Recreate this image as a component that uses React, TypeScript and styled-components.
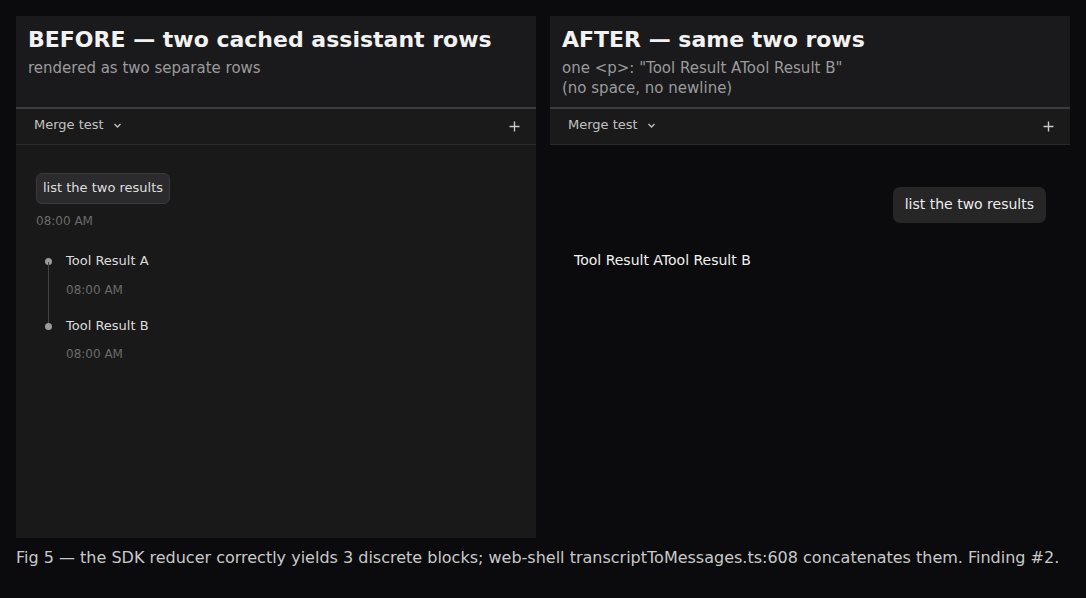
import React from "react";
import styled, { createGlobalStyle } from "styled-components";

const Global = createGlobalStyle`
  html, body { margin: 0; padding: 0; background: #0b0b0d; }
  body { font-family: "DejaVu Sans", sans-serif; color: #e6e6e6; }
`;

const Page = styled.div`
  padding: 16px;
  display: flex;
  flex-direction: column;
  gap: 10px;
`;

const Columns = styled.div`
  display: grid;
  grid-template-columns: 520px 520px;
  column-gap: 14px;
`;

const Panel = styled.section<{ $dark?: boolean }>`
  height: 522px;
  display: flex;
  flex-direction: column;
  background: ${(p) => (p.$dark ? "#0b0b0d" : "#191919")};
`;

const Header = styled.header`
  height: 93px;
  box-sizing: border-box;
  padding: 10px 12px 0;
  background: #1a1a1c;
  border-bottom: 2px solid #3b3b3f;
`;

const Title = styled.h2`
  margin: 0;
  font-size: 22px;
  font-weight: 700;
  line-height: 28px;
  color: #f2f2f2;
`;

const Subtitle = styled.p`
  margin: 4px 0 0;
  font-size: 15px;
  line-height: 20px;
  color: #9b9b9b;
`;

const Toolbar = styled.div`
  height: 36px;
  box-sizing: border-box;
  display: flex;
  align-items: center;
  justify-content: space-between;
  padding: 0 16px 0 18px;
  background: #1a1a1a;
  border-bottom: 1px solid #2a2a2a;
`;

const Picker = styled.div`
  display: flex;
  align-items: center;
  gap: 8px;
  font-size: 13px;
  color: #c2c2c2;
  margin-top: -5px;
`;

const IconButton = styled.span`
  display: flex;
  color: #c8c8c8;
`;

const Body = styled.div<{ $pad: string }>`
  flex: 1;
  padding: ${(p) => p.$pad};
  display: flex;
  flex-direction: column;
`;

const Bubble = styled.div`
  align-self: flex-start;
  padding: 6px 6px 8px;
  font-size: 13px;
  line-height: 15px;
  color: #dedede;
  background: #2b2b2d;
  border: 1px solid #3a3a3c;
  border-radius: 6px;
`;

const RightBubble = styled.div`
  align-self: flex-end;
  height: 36px;
  box-sizing: border-box;
  padding: 0 12px 3px;
  display: flex;
  align-items: center;
  font-size: 14px;
  color: #ececec;
  background: #262626;
  border-radius: 7px;
`;

const Time = styled.div<{ $top: number }>`
  margin-top: ${(p) => p.$top}px;
  font-size: 12px;
  line-height: 14px;
  color: #6b6b6b;
`;

const Timeline = styled.ol`
  list-style: none;
  margin: 25px 0 0;
  padding: 0 0 0 30px;
  display: flex;
  flex-direction: column;
  gap: 21px;
`;

const Entry = styled.li<{ $last?: boolean }>`
  position: relative;
  font-size: 13px;
  line-height: 16px;
  color: #dcdcdc;

  &::before {
    content: "";
    position: absolute;
    left: -21px;
    top: 5px;
    width: 7px;
    height: 7px;
    border-radius: 50%;
    background: #9a9a9a;
  }

  &::after {
    content: "";
    display: ${(p) => (p.$last ? "none" : "block")};
    position: absolute;
    left: -18px;
    top: 9px;
    width: 1px;
    height: 65px;
    background: #444;
  }
`;

const Merged = styled.p`
  margin: 28px 0 0;
  font-size: 14px;
  line-height: 18px;
  color: #f2f2f2;
`;

const Caption = styled.p`
  margin: 0;
  font-size: 16px;
  line-height: 20px;
  color: #c9c9c9;
`;

const Chevron = () => (
  <svg width="11" height="11" viewBox="0 0 11 11" fill="none" stroke="currentColor" strokeWidth="1.3" style={{ marginTop: 3 }}>
    <path d="M2.5 4 L5.5 7 L8.5 4" />
  </svg>
);

const Plus = () => (
  <svg width="11" height="11" viewBox="0 0 11 11" stroke="currentColor" strokeWidth="1.4">
    <path d="M5.5 0.5 V10.5 M0.5 5.5 H10.5" />
  </svg>
);

const Bar = () => (
  <Toolbar>
    <Picker>
      Merge test <Chevron />
    </Picker>
    <IconButton>
      <Plus />
    </IconButton>
  </Toolbar>
);

export default function App() {
  return (
    <>
      <Global />
      <Page>
        <Columns>
          <Panel>
            <Header>
              <Title>BEFORE — two cached assistant rows</Title>
              <Subtitle>rendered as two separate rows</Subtitle>
            </Header>
            <Bar />
            <Body $pad="28px 20px">
              <Bubble>list the two results</Bubble>
              <Time $top={10}>08:00 AM</Time>
              <Timeline>
                <Entry>
                  Tool Result A
                  <Time $top={14}>08:00 AM</Time>
                </Entry>
                <Entry $last>
                  Tool Result B
                  <Time $top={13}>08:00 AM</Time>
                </Entry>
              </Timeline>
            </Body>
          </Panel>
          <Panel $dark>
            <Header>
              <Title>AFTER — same two rows</Title>
              <Subtitle>
                one &lt;p&gt;: "Tool Result ATool Result B"
                <br />
                (no space, no newline)
              </Subtitle>
            </Header>
            <Bar />
            <Body $pad="42px 24px">
              <RightBubble>list the two results</RightBubble>
              <Merged>Tool Result ATool Result B</Merged>
            </Body>
          </Panel>
        </Columns>
        <Caption>
          Fig 5 — the SDK reducer correctly yields 3 discrete blocks; web-shell transcriptToMessages.ts:608 concatenates them. Finding #2.
        </Caption>
      </Page>
    </>
  );
}
